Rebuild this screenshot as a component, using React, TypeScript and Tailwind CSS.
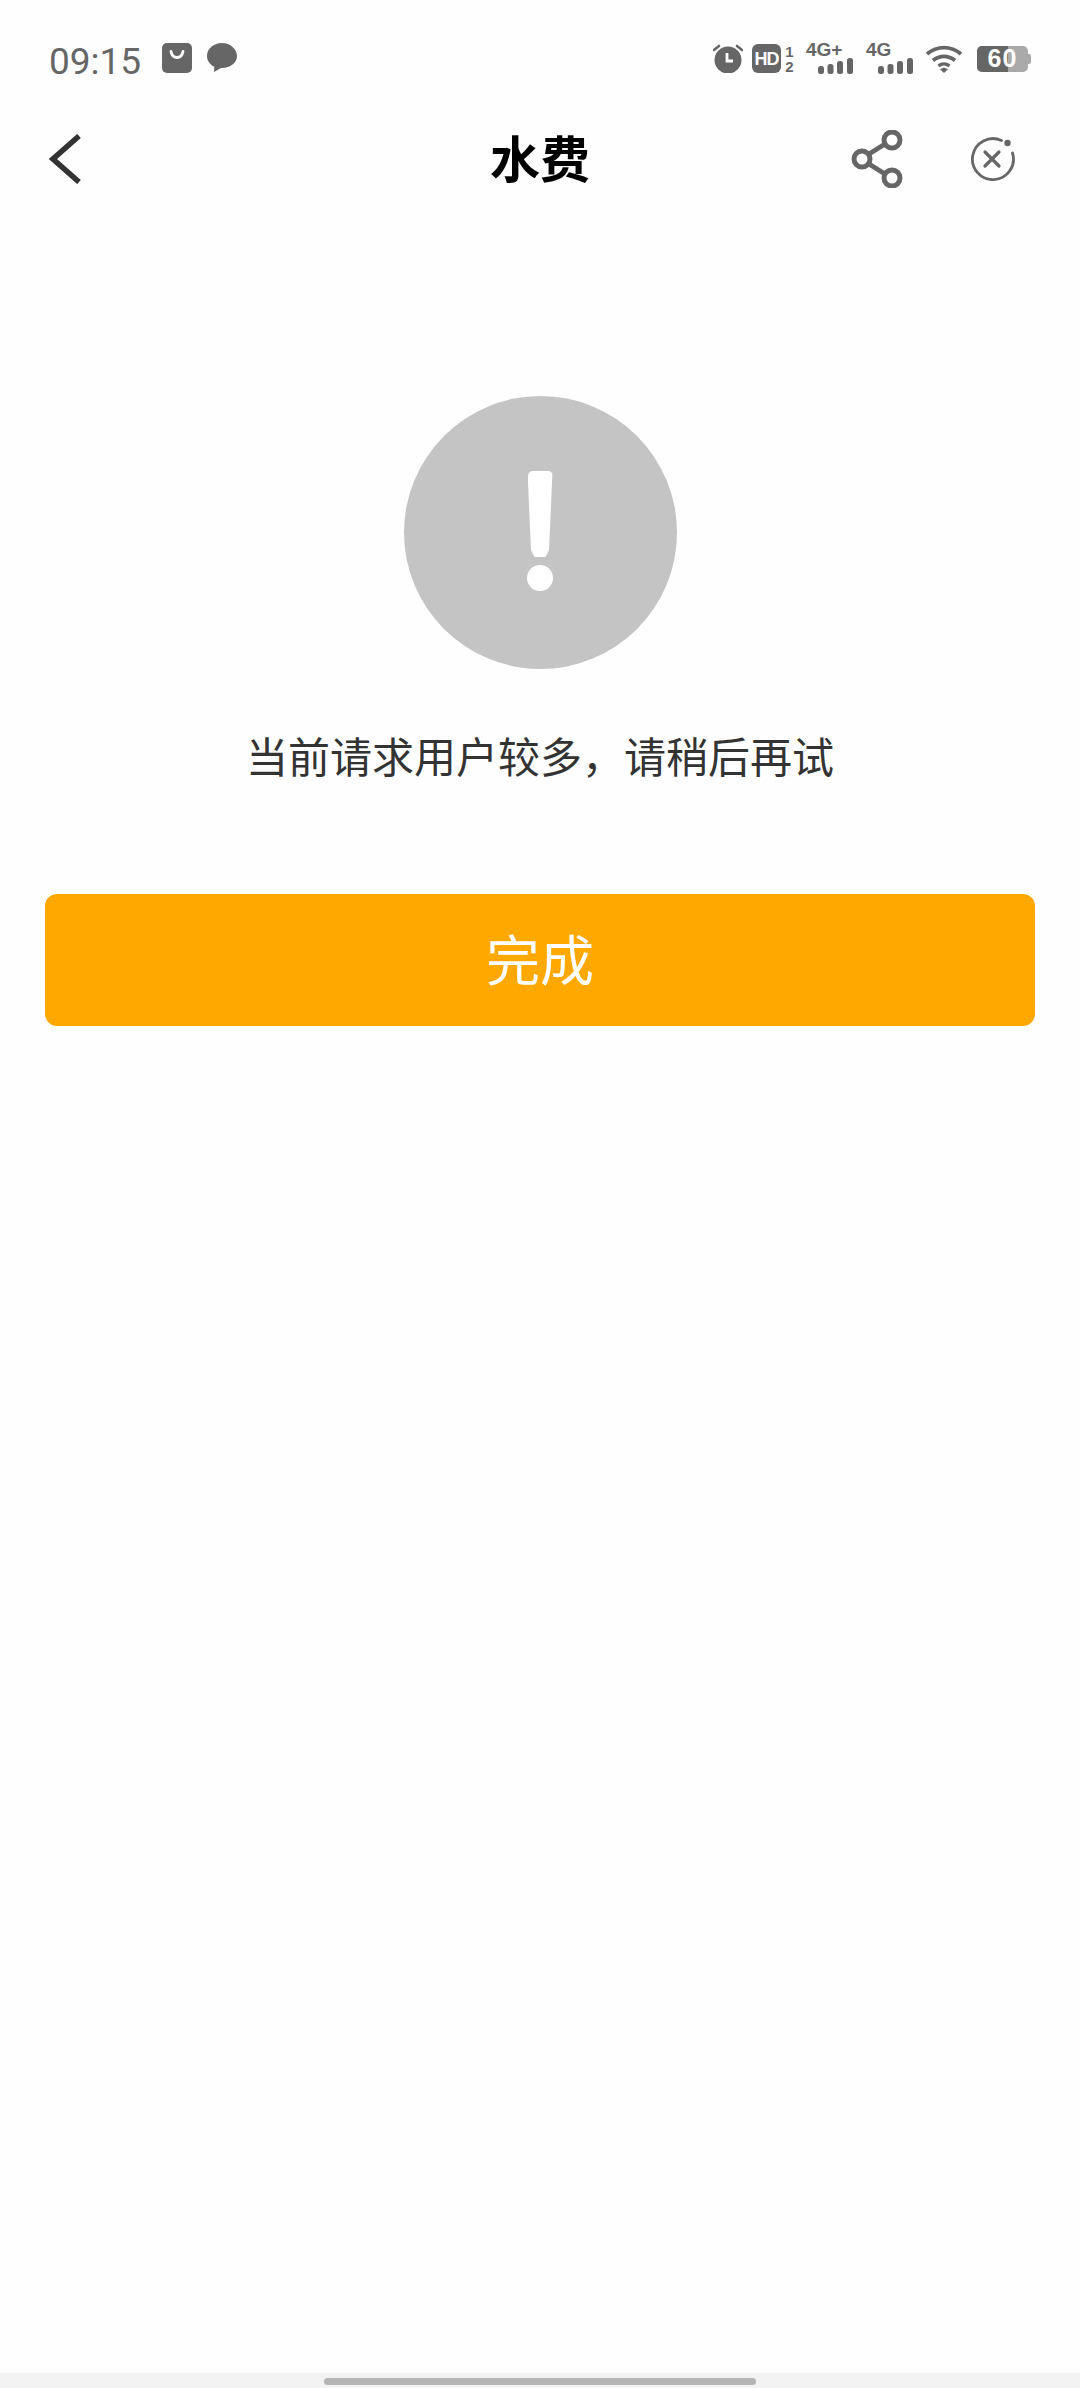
const cjk = "font-['Noto_Sans_CJK_SC','Noto_Sans',sans-serif]"

function BagIcon() {
  return (
    <svg width="30" height="30" viewBox="0 0 30 30">
      <rect width="30" height="30" rx="5" fill="#666" />
      <path d="M9 8.500c.8 4.200 3 6 6 6s5.200-1.800 6-6" fill="none" stroke="#fff" strokeWidth="2.800" strokeLinecap="round" />
    </svg>
  )
}

function BubbleIcon() {
  return (
    <svg width="30" height="30" viewBox="0 0 30 30">
      <path d="M15 0C6.700 0 0 5.600 0 13c0 4.800 3 8.600 7.300 10.800L7 29l7-4.100c.4 0 .7.100 1 .100 8.300 0 15-5.200 15-12S23.300 0 15 0z" fill="#666" />
    </svg>
  )
}

function AlarmIcon() {
  return (
    <svg width="30" height="29" viewBox="0 0 30 29">
      <circle cx="15" cy="16" r="13.500" fill="#666" />
      <path d="M14 9v8h6" fill="none" stroke="#fff" strokeWidth="2.800" />
      <path d="M1 6l5-4M29 6l-5-4" stroke="#666" strokeWidth="2.600" strokeLinecap="round" />
    </svg>
  )
}

function SignalBars() {
  return (
    <svg width="35" height="16" viewBox="0 0 35 16">
      <rect x="0" y="8" width="6" height="8" rx="2.500" fill="#666" />
      <rect x="9.500" y="6" width="6" height="10" rx="2.500" fill="#666" />
      <rect x="19" y="3" width="6" height="13" rx="2.500" fill="#666" />
      <rect x="29" y="0" width="6" height="16" rx="2.500" fill="#666" />
    </svg>
  )
}

function WifiIcon() {
  return (
    <svg width="36" height="28" viewBox="0 0 36 28">
      <path d="M1 9c10-8.500 24-8.500 34 0" fill="none" stroke="#666" strokeWidth="3.800" />
      <path d="M7 15.500c6.500-5.500 15.500-5.500 22 0" fill="none" stroke="#666" strokeWidth="3.800" />
      <path d="M12.500 21c3.200-2.600 7.800-2.600 11 0" fill="none" stroke="#666" strokeWidth="3.400" />
      <path d="M14 24.200l4-1.700 4 1.700-4 3.800z" fill="#666" />
    </svg>
  )
}

function NetworkBadge({ label }: { label: string }) {
  return (
    <div className="flex w-[47px] flex-col">
      <span className="h-[14px] text-[19px] font-bold leading-[14px] text-[#666]">{label}</span>
      <div className="mt-[1px] flex self-end">
        <SignalBars />
      </div>
    </div>
  )
}

function StatusBar() {
  return (
    <div className="flex h-[75px] items-end justify-between pl-[49px] pr-[49px] pb-[1px]">
      <div className="flex items-center">
        <span className="w-[113px] translate-y-[4px] font-['Roboto',sans-serif] text-[37px] font-normal leading-[32px] text-[#666]">
          09:15
        </span>
        <BagIcon />
        <div className="ml-[15px] flex">
          <BubbleIcon />
        </div>
      </div>
      <div className="flex items-center font-['Liberation_Sans',sans-serif]">
        <AlarmIcon />
        <div className="ml-[9px] flex h-[29px] w-[29px] items-center justify-center rounded-[6px] bg-[#666] text-[18px] font-bold leading-none tracking-[-1px] text-white">
          HD
        </div>
        <div className="ml-[3px] flex w-[11px] flex-col items-center text-[15px] font-bold leading-[15px] text-[#666]">
          <span>1</span>
          <span>2</span>
        </div>
        <div className="ml-[11px]">
          <NetworkBadge label="4G+" />
        </div>
        <div className="ml-[13px]">
          <NetworkBadge label="4G" />
        </div>
        <div className="ml-[13px] flex">
          <WifiIcon />
        </div>
        <div className="ml-[15px] flex items-center">
          <div className="relative h-[26px] w-[51px] rounded-[5px] bg-[#aaa]">
            <div className="h-full w-[31px] rounded-l-[5px] bg-[#666]" />
            <span className="absolute inset-0 flex items-center justify-center text-[25px] font-bold leading-none tracking-[1px] text-white">
              60
            </span>
          </div>
          <div className="h-[10px] w-[3px] rounded-r-[2px] bg-[#aaa]" />
        </div>
      </div>
    </div>
  )
}

function NavBar() {
  return (
    <div className="mt-[34px] grid h-[100px] grid-cols-[1fr_auto_1fr] items-center px-[65px]">
      <svg className="-ml-[16px]" width="32" height="50" viewBox="0 0 32 50">
        <path d="M30 2L4 25l26 23" fill="none" stroke="#333" strokeWidth="5.500" />
      </svg>
      <h1 className={`${cjk} pb-[6px] text-[50px] font-bold leading-none text-black`}>水费</h1>
      <div className="flex items-center justify-end gap-[68px]">
        <svg width="52" height="58" viewBox="0 0 52 58">
          <circle cx="11" cy="29" r="8" fill="none" stroke="#666" strokeWidth="5" />
          <circle cx="41" cy="10" r="8" fill="none" stroke="#666" strokeWidth="5" />
          <circle cx="41" cy="48" r="8" fill="none" stroke="#666" strokeWidth="5" />
          <path d="M18 24l16-10M18 34l16 10" stroke="#666" strokeWidth="5" />
        </svg>
        <svg width="44" height="44" viewBox="0 0 44 44">
          <path d="M30.500 3.500A20.500 20.500 0 1 0 41.500 16" fill="none" stroke="#666" strokeWidth="2.800" strokeLinecap="round" />
          <circle cx="36.500" cy="6" r="3.200" fill="#666" />
          <path d="M14 15l14 14M28 15L14 29" stroke="#666" strokeWidth="3.200" strokeLinecap="round" />
        </svg>
      </div>
    </div>
  )
}

export default function App() {
  return (
    <div className={`flex h-[2388px] w-[1080px] flex-col overflow-hidden bg-[#fefefe] ${cjk}`}>
      <StatusBar />
      <NavBar />
      <main className="flex flex-1 flex-col items-center px-[45px]">
        <div className="mt-[187px] flex h-[273px] w-[273px] flex-col items-center rounded-full bg-[#c4c4c4]">
          <div className="mt-[75px] h-[86px] w-[25px] rounded-t-[5px] bg-white [clip-path:polygon(0_0,100%_0,86%_92%,72%_100%,28%_100%,14%_92%)]" />
          <div className="mt-[8px] h-[26px] w-[26px] rounded-full bg-white" />
        </div>
        <p className="mt-[61px] text-[42px] leading-[50px] text-[#333]">{'当前请求用户较多\uFF0C请稍后再试'}</p>
        <button className="mt-[114px] flex h-[132px] w-full items-center justify-center rounded-[12px] bg-[#ffa800] pb-[5px] text-[54px] text-white">
          完成
        </button>
      </main>
      <div className="flex h-[15px] justify-center bg-[#f3f3f3] pt-[5px]">
        <div className="h-[7px] w-[432px] rounded-full bg-[#b5b5b5]" />
      </div>
    </div>
  )
}
